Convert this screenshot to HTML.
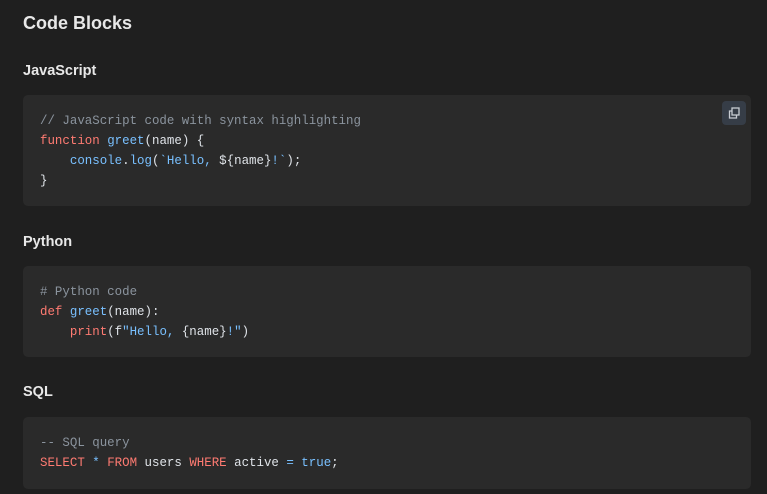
<!DOCTYPE html>
<html><head><style>
body{margin:0;background:#1f1f1f;width:767px;height:494px;overflow:hidden;font-family:"Liberation Sans",sans-serif;color:#e4e4e4}
.h1{position:absolute;left:23px;top:13px;font-size:18px;font-weight:bold;color:#e8e8e8}
.h3{position:absolute;left:23px;font-size:14.5px;font-weight:bold;color:#e8e8e8}
.blk{position:absolute;left:23px;width:728px;background:#2a2a2a;border-radius:5px;box-sizing:border-box;padding:16px 17px 14px;font-family:"Liberation Mono",monospace;font-size:12.45px;line-height:20px;color:#dfe3e8;white-space:pre}
.c{color:#8b949e}.k{color:#ff7b72}.f{color:#79c0ff}.s{color:#79c0ff}
.btn{position:absolute;left:722px;top:101px;width:24px;height:24px;background:#363d47;border-radius:4px}
</style></head><body>
<div class="h1">Code Blocks</div>
<div class="h3" style="top:63px">JavaScript</div>
<div class="blk" style="top:95px;height:111px"><span class="c">// JavaScript code with syntax highlighting</span>
<span class="k">function</span> <span class="f">greet</span>(name) {
    <span class="f">console</span>.<span class="f">log</span>(<span class="s">`Hello, </span>${name}<span class="s">!`</span>);
}</div>
<div class="btn"><svg width="24" height="24" viewBox="0 0 24 24" fill="none" stroke="#c8ccd2" stroke-width="1.3"><rect x="10" y="7" width="7" height="7"/><path d="M10 10H7.5V17H14.5V14"/></svg></div>
<div class="h3" style="top:234px">Python</div>
<div class="blk" style="top:266px;height:91px"><span class="c"># Python code</span>
<span class="k">def</span> <span class="f">greet</span>(name):
    <span class="k">print</span>(f<span class="s">"Hello, </span>{name}<span class="s">!"</span>)</div>
<div class="h3" style="top:384px">SQL</div>
<div class="blk" style="top:417px;height:72px"><span class="c">-- SQL query</span>
<span class="k">SELECT</span> <span class="f">*</span> <span class="k">FROM</span> users <span class="k">WHERE</span> active <span class="f">=</span> <span class="f">true</span>;</div>
</body></html>
